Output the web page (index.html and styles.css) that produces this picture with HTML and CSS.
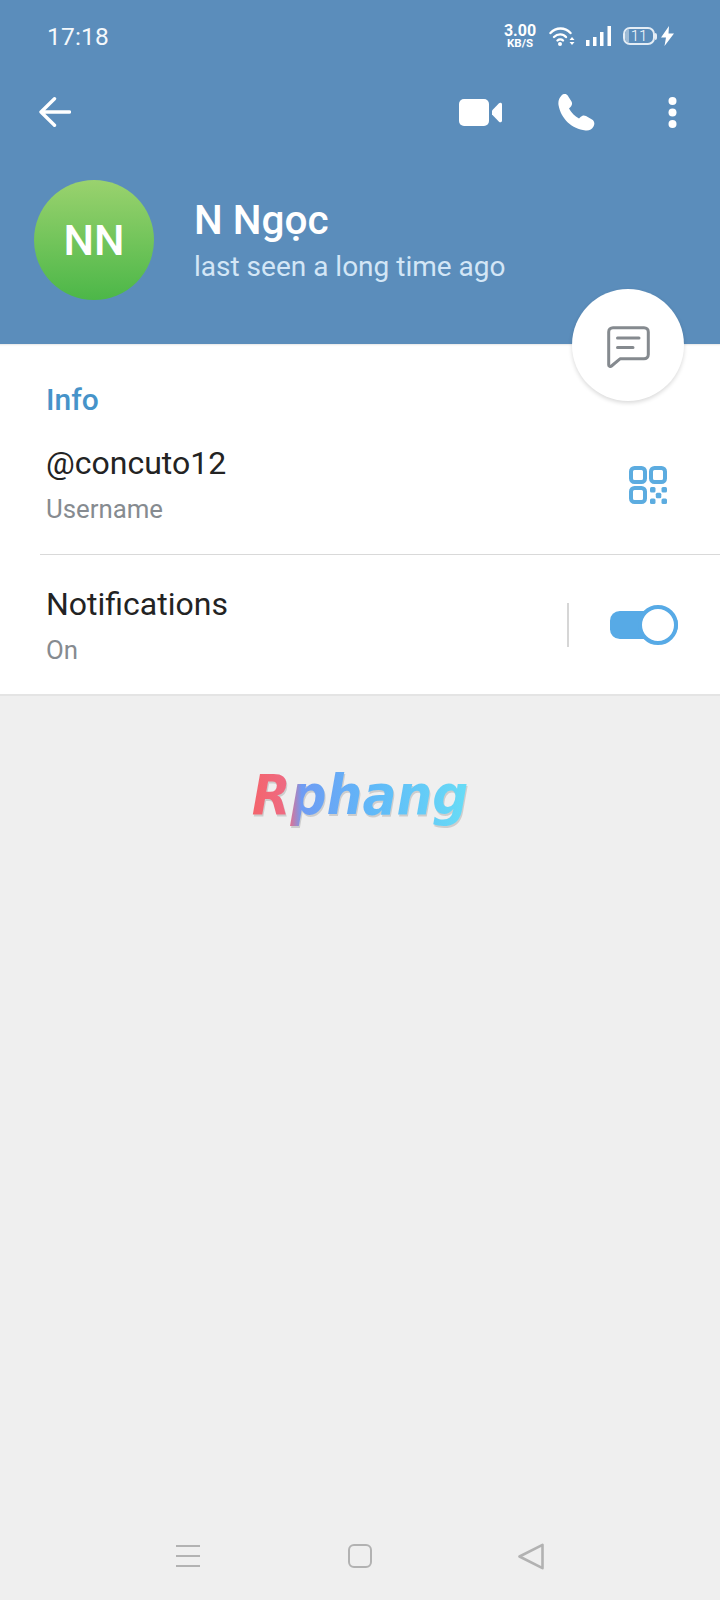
FILE: index.html
```html
<!DOCTYPE html>
<html lang="en">
<head>
<meta charset="utf-8">
<title>N Ngọc</title>
<link rel="stylesheet" href="styles.css">
</head>
<body>
<div class="screen">
  <header class="header">
    <div class="status">
      <span class="time">17:18</span>
      <div class="status-icons">
        <div class="speed"><span class="speed-num">3.00</span><span class="speed-unit">KB/S</span></div>
        <svg class="i-wifi" viewBox="0 0 26 20" width="26" height="20" fill="none" stroke="#fff" stroke-width="2.400" stroke-linecap="round">
          <path d="M1.500 7C7 1 16 1 21.500 7"/><path d="M5 11C8.500 7.500 14 7.500 17 11"/><path d="M8.500 14.500C10 13 12.500 13 14 14.500"/>
          <circle cx="11" cy="18" r="2" fill="#fff" stroke="none"/>
          <path d="M20.500 14l2.500-3 2.500 3zM20.500 16l2.500 3 2.500-3z" fill="#fff" stroke="none"/>
        </svg>
        <svg class="i-signal" viewBox="0 0 25 20" width="25" height="20" fill="#fff">
          <rect x="0" y="14" width="3.500" height="6"/><rect x="7" y="11" width="3.500" height="9"/><rect x="14" y="6" width="3.500" height="14"/><rect x="21.500" y="0" width="3.500" height="20"/>
        </svg>
        <div class="battery"><span class="battery-cell"><span class="battery-fill"></span><span class="battery-num">11</span></span><span class="battery-cap"></span></div>
        <svg class="i-bolt" viewBox="0 0 13 20" width="13" height="20" fill="#fff"><path d="M8 0L0 11.500h5L3.500 20 13 7.500H7.500z"/></svg>
      </div>
    </div>
    <div class="toolbar">
      <svg class="i-back" viewBox="0 0 32 30" width="32" height="30" fill="none" stroke="#fff" stroke-width="3.400" stroke-linecap="round" stroke-linejoin="round"><path d="M2 15h28.500M15.500 1.800L2 15l13.500 13.200"/></svg>
      <div class="toolbar-actions">
        <svg class="i-video" viewBox="0 0 43 27" width="43" height="27" fill="#fff"><rect x="0" y="0" width="30" height="27" rx="5"/><path d="M33 11.500L40 4.200c1-1 3-.5 3 1V21.800c0 1.500-2 2-3 1l-7-7.300z"/></svg>
        <svg class="i-phone" viewBox="0 0 37 37" width="37" height="37" fill="#fff"><path d="M3.500 1.500c2-2 5-2 6.500 .5l3.500 5.500c1 2 .5 4-1 5.500l-1.500 1.500c2.500 4.500 5.500 7.500 10 10l1.500-1.500c1.500-1.500 3.500-2 5.500-1l6 3.500c2.500 1.500 3 4.500 1.500 7-1.500 3-4.500 4.500-8 4C14 35 3 25 .5 11 0 7.500 1 4 3.500 1.500z"/></svg>
        <svg class="i-more" viewBox="0 0 9 31" width="9" height="31" fill="#fff"><circle cx="4.500" cy="4" r="4"/><circle cx="4.500" cy="15.500" r="4"/><circle cx="4.500" cy="27" r="4"/></svg>
      </div>
    </div>
    <div class="profile">
      <div class="avatar">NN</div>
      <div class="profile-text">
        <div class="name">N Ngọc</div>
        <div class="seen">last seen a long time ago</div>
      </div>
    </div>
  </header>
  <button class="fab" aria-label="Message">
    <svg viewBox="0 0 43 42" width="43" height="42" fill="none" stroke="#858a8f" stroke-width="3" stroke-linecap="round" stroke-linejoin="round"><path d="M6 1.700H37c2.500 0 4.300 1.800 4.300 4.300V28.500c0 2.500-1.800 4.300-4.300 4.300H13L4.500 40c-1.200 1-2.800.4-2.800-1V6c0-2.500 1.800-4.300 4.300-4.300z"/><path d="M10.500 12H32M10.500 21.500H26"/></svg>
  </button>
  <section class="info">
    <h2 class="info-title">Info</h2>
    <div class="row row-user">
      <div class="row-text">
        <div class="row-main">@concuto12</div>
        <div class="row-sub">Username</div>
      </div>
      <svg class="i-qr" viewBox="0 0 38 38" width="38" height="38" fill="none" stroke="#5cace0" stroke-width="4">
        <rect x="2" y="2" width="14" height="14" rx="3.500"/><rect x="22" y="2" width="14" height="14" rx="3.500"/><rect x="2" y="22" width="14" height="14" rx="3.500"/>
        <g fill="#5cace0" stroke="none"><rect x="21" y="21" width="5.500" height="5.500" rx="1.500"/><rect x="32.500" y="21" width="5.500" height="5.500" rx="1.500"/><rect x="26.800" y="26.800" width="5.500" height="5.500" rx="1.500"/><rect x="21" y="32.500" width="5.500" height="5.500" rx="1.500"/><rect x="32.500" y="32.500" width="5.500" height="5.500" rx="1.500"/></g>
      </svg>
    </div>
    <div class="row row-notif">
      <div class="row-text">
        <div class="row-main">Notifications</div>
        <div class="row-sub">On</div>
      </div>
      <div class="vline"></div>
      <div class="switch"><span class="thumb"></span></div>
    </div>
  </section>
  <main class="content">
    <div class="logo">Rphang</div>
  </main>
  <nav class="nav">
    <span class="nav-menu"><span></span><span></span><span></span></span>
    <span class="nav-home"></span>
    <svg class="nav-back" viewBox="0 0 26 27" width="26" height="27" fill="none" stroke="#b2b2b2" stroke-width="2.600" stroke-linejoin="round"><path d="M24.500 1.800v23.400L1.500 13.500z"/></svg>
  </nav>
</div>
</body>
</html>
```
FILE: styles.css
```css
* { box-sizing: border-box; }
html, body { margin: 0; padding: 0; }
body { font-family: Roboto, "Noto Sans", sans-serif; background: #efefef; }
.screen { position: relative; width: 720px; height: 1600px; display: flex; flex-direction: column; background: #efefef; overflow: hidden; }

.header { height: 344px; background: #5b8dbb; color: #fff; flex: none; }
.status { height: 72px; padding: 24px 46px 0 47px; display: flex; justify-content: space-between; align-items: flex-start; }
.time { font-size: 24.500px; line-height: 26px; letter-spacing: .2px; color: #f4f8fb; }
.status-icons { display: flex; align-items: center; height: 24px; }
.speed { display: flex; flex-direction: column; align-items: center; width: 34px; font-weight: 700; color: #fff; }
.speed-num { font-size: 16px; line-height: 14px; }
.speed-unit { font-size: 11.500px; line-height: 10px; }
.i-wifi { margin-left: 12px; }
.i-signal { margin-left: 11px; }
.battery { margin-left: 12px; display: flex; align-items: center; }
.battery-cell { position: relative; width: 32px; height: 18px; border: 2px solid #e4edf5; border-radius: 7px; display: flex; align-items: center; justify-content: center; overflow: hidden; }
.battery-fill { position: absolute; left: 0; top: 0; bottom: 0; width: 4px; background: #9fbcd6; }
.battery-num { position: relative; font-size: 15px; line-height: 14px; font-weight: 300; color: #fff; }
.battery-cap { width: 2px; height: 7px; background: #e4edf5; border-radius: 0 2px 2px 0; }
.i-bolt { margin-left: 4px; }

.toolbar { height: 76px; padding: 4px 43px 0 39px; display: flex; justify-content: space-between; align-items: center; }
.toolbar-actions { display: flex; align-items: center; }
.i-phone { margin-left: 56px; }
.i-more { margin-left: 73px; }

.profile { display: flex; align-items: center; padding: 32px 0 0 34px; }
.avatar { width: 120px; height: 120px; border-radius: 50%; background: linear-gradient(#9ad26e, #4cb748); display: flex; align-items: center; justify-content: center; font-size: 43px; font-weight: 500; color: #fff; }
.profile-text { margin-left: 40px; padding-top: 1px; }
.name { font-size: 40.500px; line-height: 48px; font-weight: 500; }
.seen { font-size: 28px; line-height: 36px; margin-top: 5px; color: #d3e6f6; }

.fab { position: absolute; left: 572px; top: 289px; width: 112px; height: 112px; border: 0; padding: 3px 0 0; border-radius: 50%; background: #fff; box-shadow: 0 2px 4px rgba(0,0,0,.15); display: flex; align-items: center; justify-content: center; }

.info { flex: none; height: 352px; background: #fff; border-bottom: 2px solid #e4e4e4; box-shadow: inset 0 3px 2px -2px rgba(0,0,0,.1); padding-left: 40px; }
.info-title { margin: 0; padding: 37px 0 0 6px; font-size: 30px; line-height: 38px; font-weight: 500; color: #4693c9; }
.row { display: flex; align-items: center; padding-right: 42px; }
.row-user { height: 137px; margin-top: -1px; padding-bottom: 5px; border-bottom: 1px solid #d9d9d9; }
.row-notif { height: 137px; padding-top: 3px; }
.row-text { flex: 1; padding-left: 6px; }
.row-main { font-size: 32px; line-height: 44px; color: #232323; }
.row-sub { font-size: 25.800px; line-height: 36px; margin-top: 6px; color: #868b90; }
.i-qr { margin: 2px 11px 0 0; }
.vline { width: 2px; height: 44px; background: #d6d6d6; margin-right: 41px; }
.switch { position: relative; width: 68px; height: 28px; background: #57aae6; border-radius: 14px 20px 20px 14px; }
.thumb { position: absolute; right: 0; top: -6px; width: 40px; height: 40px; border-radius: 50%; background: #fff; border: 4px solid #57aae6; }

.content { flex: 1; display: flex; justify-content: center; align-items: flex-start; padding-top: 66px; }
.logo { font-family: "DejaVu Sans Condensed", "DejaVu Sans", sans-serif; font-size: 56px; line-height: 66px; font-weight: 700; font-style: italic; background: linear-gradient(90deg, #f4646c 0%, #ee6b84 17%, #6f9cf3 23%, #60b8f8 55%, #68dcf6 100%); -webkit-background-clip: text; background-clip: text; color: transparent; filter: drop-shadow(1px 2px 0 rgba(0,0,0,.14)); }

.nav { flex: none; height: 88px; display: flex; align-items: flex-start; padding: 32px 0 0 176px; gap: 148px; }
.nav-menu { width: 24px; height: 24px; display: flex; flex-direction: column; justify-content: space-between; padding: 1px 0; }
.nav-menu span { height: 2px; background: #b2b2b2; }
.nav-home { width: 24px; height: 24px; border: 2.400px solid #b2b2b2; border-radius: 6px; }
.nav-back { margin: -1px 0 0 -2px; }
```
